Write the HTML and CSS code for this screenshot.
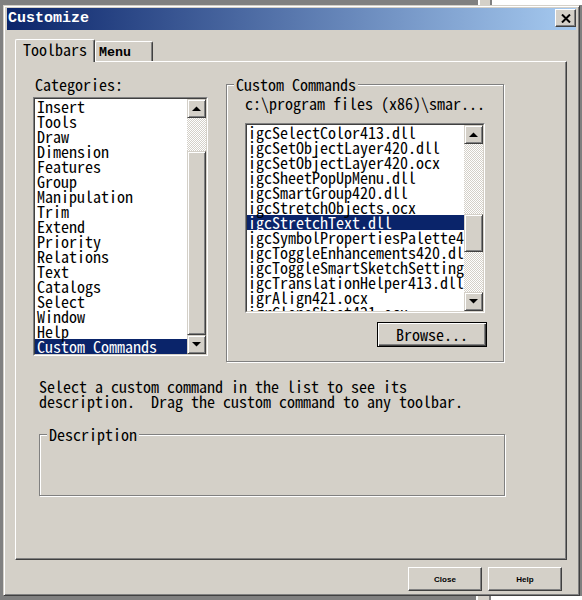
FILE: index.html
```html
<!DOCTYPE html>
<html lang="en">
<head>
  <meta charset="UTF-8">
  <meta name="viewport" content="width=device-width, initial-scale=1.0">
  <title>Customize</title>
  <link rel="stylesheet" href="styles.css">
</head>
<body>
  <div class="window">
    <div class="titlebar">
      <span class="title">Customize</span>
      <button class="close-btn" title="Close">
        <svg width="10" height="9" viewBox="0 0 10 9"><path d="M1 0.5L9 8.5M9 0.5L1 8.5" stroke="#000" stroke-width="2"/></svg>
      </button>
    </div>

    <div class="tabs">
      <div class="tab active">Toolbars</div>
      <div class="tab menu">Menu</div>
    </div>

    <div class="panel">
      <div class="columns">
        <div class="categories">
          <div class="label">Categories:</div>
          <div class="listbox cat-list">
            <div class="well">
              <ul class="items">
                <li>Insert</li>
                <li>Tools</li>
                <li>Draw</li>
                <li>Dimension</li>
                <li>Features</li>
                <li>Group</li>
                <li>Manipulation</li>
                <li>Trim</li>
                <li>Extend</li>
                <li>Priority</li>
                <li>Relations</li>
                <li>Text</li>
                <li>Catalogs</li>
                <li>Select</li>
                <li>Window</li>
                <li>Help</li>
                <li class="selected">Custom Commands</li>
              </ul>
              <div class="scrollbar">
                <div class="sb-btn"><svg width="9" height="5" viewBox="0 0 9 5"><polygon points="0,5 9,5 4.5,0.5" fill="#000"/></svg></div>
                <div class="track" style="height: 33px"></div>
                <div class="thumb" style="height: 184px"></div>
                <div class="track fill"></div>
                <div class="sb-btn"><svg width="9" height="5" viewBox="0 0 9 5"><polygon points="0,0 9,0 4.5,4.5" fill="#000"/></svg></div>
              </div>
            </div>
          </div>
        </div>

        <fieldset class="group commands">
          <legend>Custom Commands</legend>
          <div class="path">c:\program files (x86)\smar...</div>
          <div class="listbox cmd-list">
            <div class="well">
              <ul class="items">
                <li>igcSelectColor413.dll</li>
                <li>igcSetObjectLayer420.dll</li>
                <li>igcSetObjectLayer420.ocx</li>
                <li>igcSheetPopUpMenu.dll</li>
                <li>igcSmartGroup420.dll</li>
                <li>igcStretchObjects.ocx</li>
                <li class="selected">igcStretchText.dll</li>
                <li>igcSymbolPropertiesPalette420.dll</li>
                <li>igcToggleEnhancements420.dll</li>
                <li>igcToggleSmartSketchSettings420.dll</li>
                <li>igcTranslationHelper413.dll</li>
                <li>igrAlign421.ocx</li>
                <li>igrCloneSheet421.ocx</li>
              </ul>
              <div class="scrollbar">
                <div class="sb-btn"><svg width="9" height="5" viewBox="0 0 9 5"><polygon points="0,5 9,5 4.5,0.5" fill="#000"/></svg></div>
                <div class="track" style="height: 70px"></div>
                <div class="thumb" style="height: 38px"></div>
                <div class="track fill"></div>
                <div class="sb-btn"><svg width="9" height="5" viewBox="0 0 9 5"><polygon points="0,0 9,0 4.5,4.5" fill="#000"/></svg></div>
              </div>
            </div>
          </div>
          <button class="push default">Browse...</button>
        </fieldset>
      </div>

      <p class="hint">Select a custom command in the list to see its<br>description.  Drag the custom command to any toolbar.</p>

      <fieldset class="group description">
        <legend>Description</legend>
      </fieldset>
    </div>

    <div class="actions">
      <button class="push small">Close</button>
      <button class="push small">Help</button>
    </div>
  </div>
</body>
</html>
```

FILE: styles.css
```css
* {
  box-sizing: border-box;
}
body {
  margin: 0;
  min-height: 600px;
  background:
    linear-gradient(to right, #808080 0 478px, #fff 478px 480px, #d4d0c8 480px 490px, #808080 490px 492px, #fff 492px) top left / 100% 5px no-repeat,
    linear-gradient(to right, #808080 0 476px, #fff 476px 478px, #d4d0c8 478px 489px, #808080 489px 491px, #fff 491px) bottom left / 100% 4px no-repeat,
    #808080;
  font: 16px/15px "Noto Sans Mono CJK SC", "Liberation Mono", monospace;
  color: #000;
}
.window {
  width: 577px;
  height: 591px;
  margin: 5px 0 0 3px;
  padding: 2px 3px 0 3px;
  background: #d4d0c8;
  border: 1px solid;
  border-color: #d4d0c8 #404040 #404040 #d4d0c8;
  box-shadow: inset 1px 1px #fff, inset -1px -1px #808080;
}
.titlebar {
  height: 22px;
  display: flex;
  justify-content: space-between;
  padding-left: 1px;
  background: linear-gradient(to right, #0a246a, #a6caf0);
}
.title {
  color: #fff;
  font: bold 15px/22px "Liberation Mono", monospace;
}
.close-btn {
  width: 21px;
  height: 18px;
  margin-top: 1px;
  padding: 0;
  display: flex;
  align-items: center;
  justify-content: center;
  background: #d4d0c8;
  border: 1px solid;
  border-color: #fff #404040 #404040 #fff;
  box-shadow: inset -1px -1px #808080;
}

/* tab strip */
.tabs {
  display: flex;
  align-items: flex-end;
  height: 22px;
  margin: 9px 0 0 8px;
}
.tab {
  height: 20px;
  background: #d4d0c8;
  border-top: 1px solid #fff;
  border-left: 1px solid #fff;
  border-right: 1px solid #404040;
  border-radius: 2px 2px 0 0;
  box-shadow: inset -1px 0 #808080;
  white-space: nowrap;
}
.tab.active {
  width: 80px;
  height: 23px;
  margin-bottom: -1px;
  padding: 2px 0 0 7px;
  position: relative;
  z-index: 1;
}
.tab.menu {
  width: 58px;
  padding: 3px 0 0 3px;
  font: bold 13.33px/15px "Liberation Mono", monospace;
}
.panel {
  height: 499px;
  margin: 0 9px 0 8px;
  padding: 15px 0 0 17px;
  border: 1px solid;
  border-color: #fff #404040 #404040 #fff;
  box-shadow: inset -1px -1px #808080;
}
.columns {
  display: grid;
  grid-template-columns: 175px 278px;
  column-gap: 18px;
  align-items: start;
}
.label {
  padding-left: 2px;
}

/* list boxes */
.listbox {
  margin-top: 5px;
  border: 1px solid;
  border-color: #808080 #fff #fff #808080;
}
.well {
  display: flex;
  overflow: hidden;
  background: #fff;
  border: 1px solid;
  border-color: #404040 #d4d0c8 #d4d0c8 #404040;
}
.cat-list .well {
  height: 257px;
}
.cmd-list {
  width: 240px;
  margin: 12px 0 0 18px;
}
.cmd-list .well {
  height: 188px;
}
.items {
  flex: 1;
  min-width: 0;
  overflow: hidden;
  list-style: none;
  margin: 0;
  padding: 0;
}
.items li {
  height: 15px;
  padding-left: 2px;
  white-space: nowrap;
}
.cmd-list .items li {
  padding-left: 1px;
}
.items li.selected {
  background: #0a246a;
  color: #fff;
}
.scrollbar {
  width: 19px;
  flex-shrink: 0;
  display: flex;
  flex-direction: column;
}
.sb-btn,
.thumb {
  flex-shrink: 0;
  background: #d4d0c8;
  border: 1px solid;
  border-color: #d4d0c8 #404040 #404040 #d4d0c8;
  box-shadow: inset 1px 1px #fff, inset -1px -1px #808080;
}
.sb-btn {
  height: 19px;
  display: flex;
  align-items: center;
  justify-content: center;
}
.track {
  flex-shrink: 0;
  background: repeating-conic-gradient(#fff 0 25%, #d4d0c8 0 50%) 0 0 / 2px 2px;
}
.track.fill {
  flex: 1;
}

/* etched group boxes */
fieldset.group {
  margin: 0;
  padding: 0 0 14px;
  min-width: 0;
  border: 1px solid #808080;
  box-shadow: 1px 1px 0 #fff, inset 1px 1px 0 #fff;
}
fieldset.group legend {
  margin-left: 7px;
  padding: 0 2px;
  background: #d4d0c8;
}
.path {
  margin: 4px 0 0 18px;
  white-space: nowrap;
}
.hint {
  margin: 17px 0 0 6px;
  white-space: pre;
}
fieldset.description {
  width: 466px;
  height: 69px;
  margin: 18px 0 0 6px;
}

/* push buttons */
.push {
  padding: 0;
  font: inherit;
  color: #000;
  background: #d4d0c8;
  border: 1px solid;
  border-color: #fff #404040 #404040 #fff;
  box-shadow: inset -1px -1px #808080;
}
.push.default {
  display: block;
  width: 110px;
  height: 25px;
  margin: 9px 0 0 150px;
  border-color: #000;
  box-shadow: inset 1px 1px #fff, inset -1px -1px #404040, inset -2px -2px #808080;
}
.actions {
  display: flex;
  justify-content: flex-end;
  gap: 6px;
  margin-top: 7px;
  padding-right: 14px;
}
.push.small {
  width: 74px;
  height: 24px;
  font: bold 8px "Liberation Sans", sans-serif;
}
```
